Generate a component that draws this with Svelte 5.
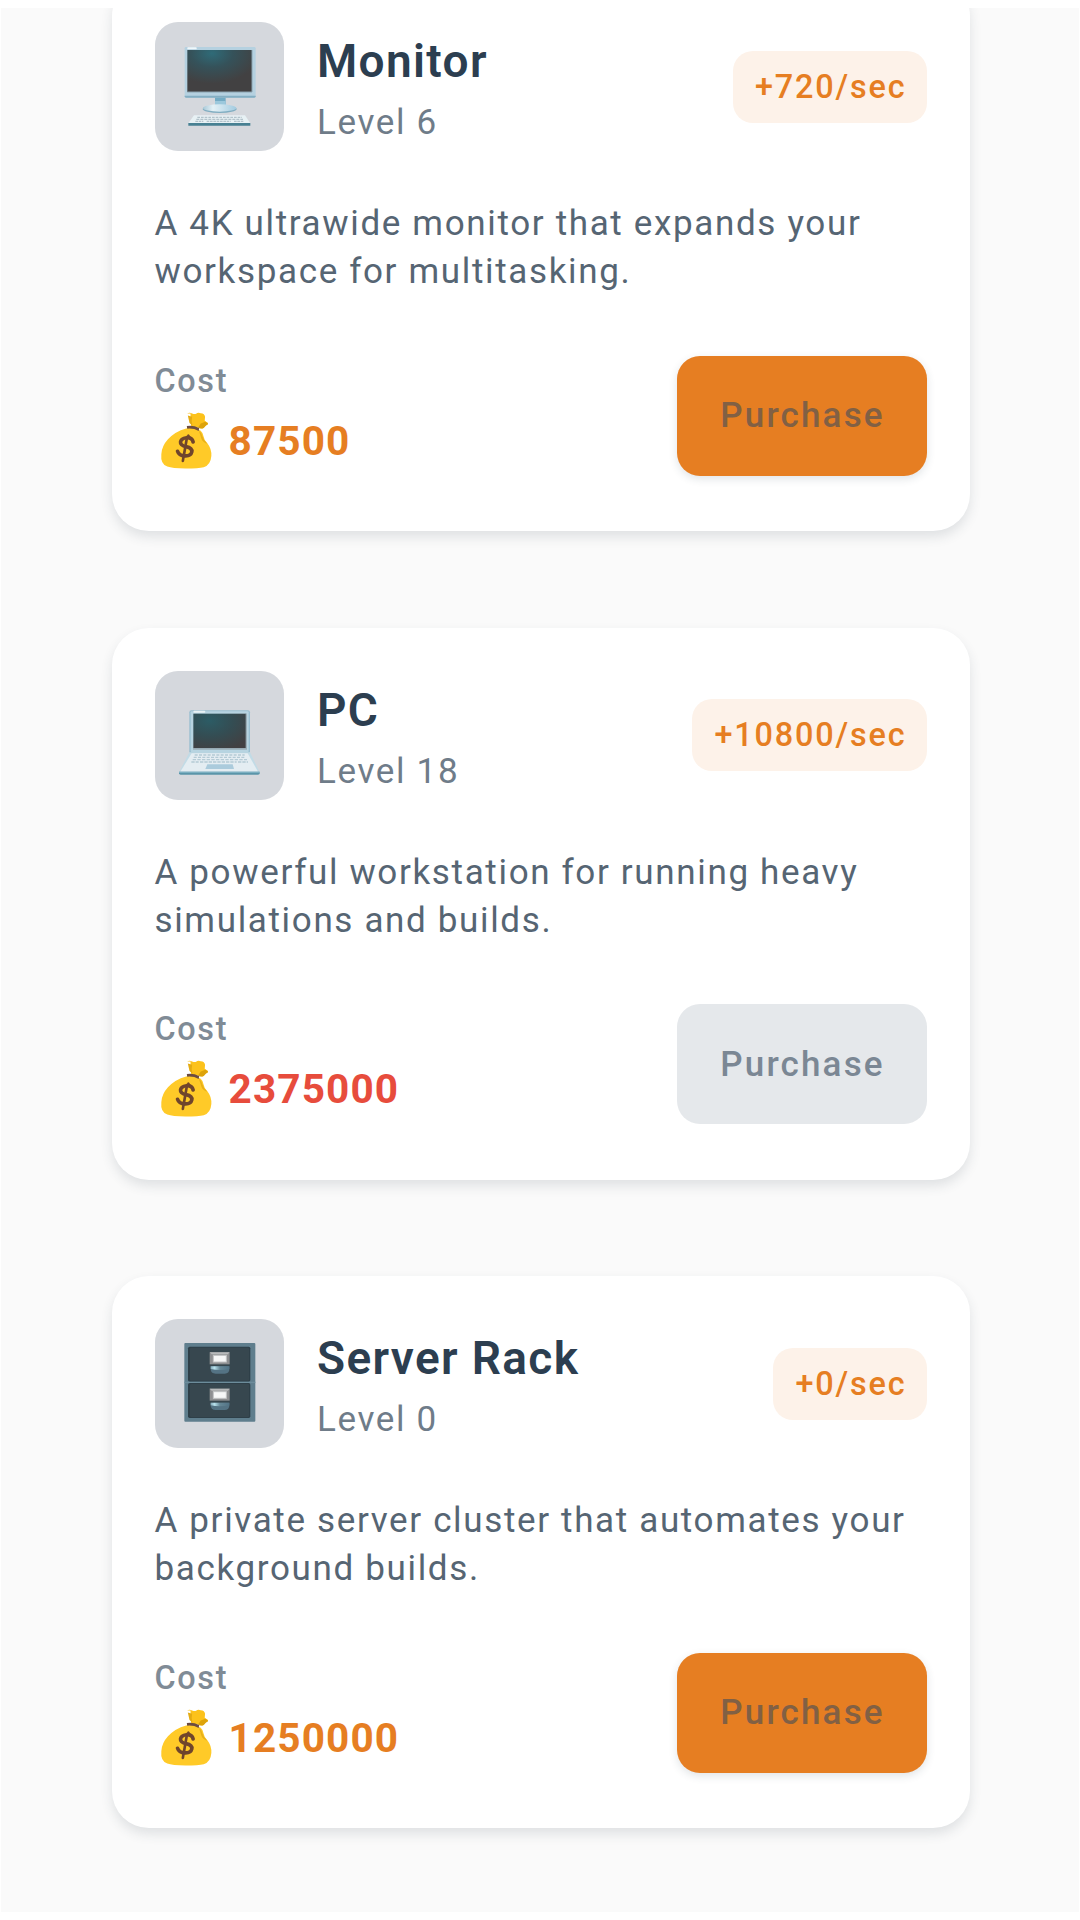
<script lang="ts">
interface Upgrade {
  icon: 'monitor' | 'laptop' | 'cabinet';
  name: string;
  level: number;
  rate: number;
  description: string;
  cost: number;
  affordable: boolean;
}

const upgrades: Upgrade[] = [
  {
    icon: 'monitor',
    name: 'Monitor',
    level: 6,
    rate: 720,
    description: 'A 4K ultrawide monitor that expands your workspace for multitasking.',
    cost: 87500,
    affordable: true,
  },
  {
    icon: 'laptop',
    name: 'PC',
    level: 18,
    rate: 10800,
    description: 'A powerful workstation for running heavy simulations and builds.',
    cost: 2375000,
    affordable: false,
  },
  {
    icon: 'cabinet',
    name: 'Server Rack',
    level: 0,
    rate: 0,
    description: 'A private server cluster that automates your background builds.',
    cost: 1250000,
    affordable: true,
  },
];
</script>

<svg class="defs" width="0" height="0" aria-hidden="true">
  <defs>
    <radialGradient id="screen" cx="0.38" cy="0.08" r="0.72">
      <stop offset="0" stop-color="#2f6b78" />
      <stop offset="0.45" stop-color="#35525a" />
      <stop offset="1" stop-color="#424142" />
    </radialGradient>
    <radialGradient id="laptop-screen" cx="0.3" cy="0.2" r="0.9">
      <stop offset="0" stop-color="#2c5c65" />
      <stop offset="0.5" stop-color="#344d53" />
      <stop offset="1" stop-color="#424042" />
    </radialGradient>
    <linearGradient id="stand" x1="0" x2="1">
      <stop offset="0" stop-color="#a9c9d8" />
      <stop offset="0.3" stop-color="#e4f1f6" />
      <stop offset="1" stop-color="#a3cbe0" />
    </linearGradient>
    <linearGradient id="handle" x1="0" x2="1">
      <stop offset="0" stop-color="#84a8b8" />
      <stop offset="0.2" stop-color="#b9e3ee" />
      <stop offset="0.5" stop-color="#658796" />
      <stop offset="1" stop-color="#527386" />
    </linearGradient>
  </defs>
</svg>

<main class="shop">
  {#each upgrades as upgrade}
    <article class="card">
      <header class="card-header">
        <div class="icon">
          <svg viewBox="15 13 387 387" aria-hidden="true">
            {#if upgrade.icon === 'monitor'}
              <rect x="104" y="88" width="213" height="152" rx="4" fill="#b5d1e0" />
              <path d="M104 234h213v2q0 4-4 4H108q-4 0-4-4z" fill="#84aec2" />
              <rect x="112" y="89" width="28" height="6" rx="2" fill="#f0f7fa" />
              <rect x="112" y="97" width="194" height="126" fill="url(#screen)" />
              <path d="M306 97v126h-194" fill="none" stroke="#8ba3af" stroke-width="3" />
              <path d="M195 240h32v24h-32z" fill="#73abc4" />
              <path d="M195 250h32v14h-32z" fill="#9cc8dc" />
              <ellipse cx="209" cy="274" rx="51" ry="12" fill="#80adc1" />
              <ellipse cx="209" cy="271" rx="50" ry="11" fill="url(#stand)" />
              <path d="M132 293h153l16 24H115z" fill="#e7f1f4" />
              <path d="M115 316h186v8H115z" fill="#478092" />
              <g fill="none" stroke="#b3c3cb" stroke-width="4">
                <path d="M142 299h134" stroke-dasharray="8 3" />
                <path d="M139 305h140" stroke-dasharray="9 3" />
                <path d="M136 311h24M170 311h72M252 311h30" stroke-dasharray="8 2" />
              </g>
            {:else if upgrade.icon === 'laptop'}
              <rect x="118" y="131" width="182" height="130" rx="6" fill="#98bed0" />
              <rect x="122" y="134" width="174" height="122" rx="3" fill="#b7d4e1" />
              <rect x="130" y="132" width="36" height="6" rx="3" fill="#e8f2f5" />
              <rect x="130" y="141" width="159" height="104" fill="url(#laptop-screen)" />
              <path d="M129 247h160V141" fill="none" stroke="#9badb6" stroke-width="4" />
              <path d="M118 257h182l29 60H87z" fill="#c2dbe6" />
              <path d="M125 260h168l31 55H91z" fill="#e4edf2" />
              <g fill="none" stroke="#b4cad5" stroke-width="4">
                <path d="M134 265h150" stroke-dasharray="9 4" />
                <path d="M131 272h156" stroke-dasharray="9 4" />
                <path d="M128 279h163" stroke-dasharray="10 4" />
                <path d="M124 286h22M150 286h110M264 286h30" stroke-dasharray="10 3" />
              </g>
              <path d="M172 293h76l4 14h-86z" fill="#abcbdc" />
              <path d="M87 315h242v5q0 4-5 4H92q-5 0-5-4z" fill="#5b95a9" />
              <path d="M87 315h242v3H87z" fill="#86b9ca" />
            {:else}
              <rect x="103" y="85" width="213" height="236" rx="3" fill="#5f7e8d" />
              {#each [0, 109] as offset}
                <g transform="translate(0 {offset})">
                  <rect x="114" y="96" width="187" height="105" rx="5" fill="#2e3f48" />
                  <rect x="120" y="99" width="177" height="99" rx="3" fill="#37474f" />
                  <rect x="179" y="113" width="60" height="36" fill="#8e8f91" />
                  <path d="M179 113h60l-6 6h-48z" fill="#b8babb" />
                  <rect x="190" y="122" width="39" height="20" fill="#f7f7f7" stroke="#c4c5c6" stroke-width="3" />
                  <path d="M182 155h56v8q0 14-14 14h-27q-15 0-15-14z" fill="#547384" />
                  <path d="M182 155h56v8q-28 6-56 0z" fill="url(#handle)" />
                </g>
              {/each}
              <path d="M103 201h213v4H103z" fill="#6c8c9b" />
            {/if}
          </svg>
        </div>
        <div class="heading">
          <h2>{upgrade.name}</h2>
          <p>Level {upgrade.level}</p>
        </div>
        <span class="rate">+{upgrade.rate}/sec</span>
      </header>

      <p class="description">{upgrade.description}</p>

      <footer class="card-footer">
        <div class="cost">
          <span class="cost-label">Cost</span>
          <div class="price" class:expensive={!upgrade.affordable}>
            <svg class="bag" viewBox="30 30 160 180" aria-hidden="true">
              <path
                d="M112 37q7-4 15 0 7 3 12 1 5-5 14-2 12 1 13 11l-1 12 10 7q0 5-6 6l-7 8q-5 4-12 0l-26-3q-2-20-2-40z"
                fill="#fcc21b"
              />
              <path d="M145 79l8-12 14-5 8 5q0 5-6 6l-7 8q-8 4-17-2z" fill="#dda30b" />
              <path d="M127 47q-3 13 1 26l-9-7-5-23z" fill="#e4ab12" />
              <path
                d="M109 82q20-6 43 6 8 6 10 20 1 10 12 20 12 15 11 37-2 27-23 34-15 4-55 4-40 0-55-6-21-7-18-37 1-24 20-45 21-24 55-33z"
                fill="#ffca28"
              />
              <path d="M147 88q9 6 12 20 3 11 14 20-14-4-18-15-2-8-8-25z" fill="#e8b018" />
              <path d="M111 75q18-4 37 6l-1 9q-16-9-35-7z" fill="#6d4c41" />
              <g fill="none" stroke="#70452c" stroke-width="11" stroke-linecap="round">
                <path d="M130 123q-3-14-20-13-17 2-18 13-1 10 16 14 20 4 18 16-3 13-21 12-18-1-22-14" />
                <path d="M116 104l-2 6M101 168l-2 12M111 112l-10 57" stroke-width="8" />
              </g>
            </svg>
            <strong>{upgrade.cost}</strong>
          </div>
        </div>
        <button class="purchase" class:disabled={!upgrade.affordable}>Purchase</button>
      </footer>
    </article>
  {/each}
</main>

<style>
  :global(body) {
    background: #fff;
    overflow: hidden;
  }

  .defs {
    position: absolute;
  }

  .shop {
    box-sizing: border-box;
    height: 1904px;
    margin: 8px 1px;
    padding: 0 109.5px 0 110.5px;
    overflow: hidden;
    display: flex;
    flex-direction: column;
    gap: 96.5px;
    background: #fafafa;
    font-family: Roboto, 'Noto Sans', sans-serif;
    letter-spacing: 1.65px;
  }

  .card {
    box-sizing: border-box;
    flex: none;
    height: 552px;
    padding: 43px;
    border-radius: 37px;
    background: #fff;
    box-shadow: 0 6px 12px rgba(44, 62, 80, 0.13);
  }

  .card:first-child {
    margin-top: -29px;
  }

  .card-header {
    display: flex;
    align-items: center;
    height: 129px;
  }

  .icon {
    width: 129px;
    height: 129px;
    border-radius: 23px;
    background: #d5d8dd;
    overflow: hidden;
  }

  .icon svg {
    display: block;
    width: 100%;
    height: 100%;
  }

  .heading {
    flex: 1;
    margin-left: 33.5px;
    padding-top: 4px;
  }

  h2,
  p {
    margin: 0;
  }

  h2 {
    font-size: 46px;
    font-weight: 600;
    line-height: 60px;
    letter-spacing: 1.35px;
    color: #2c3e50;
  }

  .heading p {
    margin-top: 9px;
    font-size: 35px;
    line-height: 46px;
    color: #6f7c89;
  }

  .rate {
    padding: 1px 20px 0 22px;
    border-radius: 20px;
    background: #fdf2e9;
    font-size: 32.4px;
    font-weight: 500;
    line-height: 71px;
    letter-spacing: 1.85px;
    color: #e67e22;
  }

  .description {
    margin-top: 49px;
    font-size: 35px;
    line-height: 48px;
    color: #566573;
  }

  .card-footer {
    display: flex;
    align-items: center;
    justify-content: space-between;
    height: 146px;
    margin-top: 46.5px;
  }

  .cost-label {
    display: block;
    font-size: 32.4px;
    font-weight: 500;
    line-height: 40px;
    color: #808b96;
  }

  .price {
    display: flex;
    align-items: center;
    gap: 16px;
    margin-top: 10px;
    padding-left: 5px;
    color: #e67e22;
  }

  .price.expensive {
    color: #e74c3c;
  }

  .bag {
    width: 53px;
    height: 60px;
  }

  .price strong {
    font-size: 40.5px;
    font-weight: 700;
    line-height: 48px;
    letter-spacing: 1.15px;
  }

  .purchase {
    width: 250px;
    height: 120px;
    padding: 0 0 0 2px;
    border: 0;
    border-radius: 23px;
    background: #e67e22;
    box-shadow: 0 3px 8px rgba(44, 62, 80, 0.14);
    font: 500 35px Roboto, 'Noto Sans', sans-serif;
    letter-spacing: 2.15px;
    color: #816044;
  }

  .purchase.disabled {
    background: #e5e8eb;
    box-shadow: none;
    color: #7b8794;
  }
</style>
